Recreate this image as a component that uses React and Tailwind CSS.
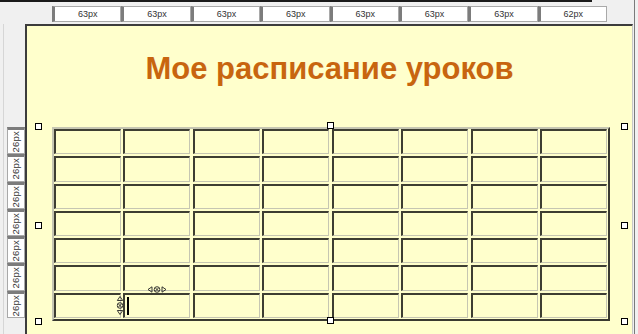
import React from "react";

const cols = ["63px", "63px", "63px", "63px", "63px", "63px", "63px", "62px"];
const rows = [0, 1, 2, 3, 4, 5, 6];

function Handle({ className }) {
  return (
    <div
      className={`absolute w-[7px] h-[7px] border border-black bg-white ${className}`}
    />
  );
}

function ResizeGlyph({ vertical }) {
  return (
    <svg
      width="20"
      height="7"
      viewBox="0 0 20 7"
      className={vertical ? "rotate-90" : ""}
    >
      <path d="M1 3.5 L5 0.8 L5 6.2 Z" fill="none" stroke="#222" strokeWidth="0.9" />
      <circle cx="10" cy="3.5" r="2.8" fill="none" stroke="#222" strokeWidth="0.9" />
      <path d="M8.3 1.8 L11.7 5.2 M11.7 1.8 L8.3 5.2" stroke="#222" strokeWidth="0.9" />
      <path d="M19 3.5 L15 0.8 L15 6.2 Z" fill="none" stroke="#222" strokeWidth="0.9" />
    </svg>
  );
}

export default function App() {
  return (
    <div className="w-[638px] h-[334px] overflow-hidden bg-[#f0f0f0] flex font-['Liberation_Sans',Arial,sans-serif]">
      <div className="w-[634px] flex flex-col">
        {/* window edge above */}
        <div className="h-[2px] w-[592px] bg-[#1a1a1a]" />

        {/* column ruler */}
        <div className="mt-[4px] ml-[52px] flex w-[555px] h-[16px]">
          {cols.map((c, i) => (
            <div
              key={i}
              className="flex-1 border-l-[3px] border-l-[#7c7c7c] border-y border-r border-[#a9a9a9] bg-white flex items-center justify-center text-[9px] text-[#333] leading-none"
            >
              {c}
            </div>
          ))}
        </div>

        {/* body */}
        <div className="mt-[2px] flex flex-1">
          {/* row ruler */}
          <div className="ml-[3px] w-[22px] border-l border-[#d6d6d6] pl-[3px] pt-[103px] flex flex-col">
            {rows.map((r) => (
              <div
                key={r}
                className="h-[27.3px] w-[18px] border-t-[3px] border-t-[#7c7c7c] border-x border-b border-[#a9a9a9] bg-white flex items-center justify-center overflow-hidden"
              >
                <span className="[writing-mode:vertical-rl] rotate-180 text-[9.5px] tracking-[0.2px] text-[#333] leading-none">
                  26px
                </span>
              </div>
            ))}
          </div>

          {/* canvas */}
          <div className="w-[608px] bg-[#ffffcc] border-l-2 border-t-2 border-[#3c3c3c] border-r border-r-[#c8c8c8]">
            <h1 className="pt-[25px] text-center text-[31px] leading-[36px] font-bold text-[#c8650f]">
              Мое расписание уроков
            </h1>

            <div className="relative mt-[40px] ml-[25px] w-[558px]">
              <div className="border-2 border-t-[#c6c6b2] border-l-[#c6c6b2] border-b-[#3a3a30] border-r-[#3a3a30] pr-px pb-px">
                <div className="grid grid-cols-8 gap-x-[2.5px] gap-y-[2px] auto-rows-[25.3px]">
                  {rows.map((r) =>
                    cols.map((c, i) => (
                      <div
                        key={`${r}-${i}`}
                        className="border-t-2 border-l-2 border-t-[#3e3e32] border-l-[#3e3e32] border-b border-r border-b-[#c6c6b2] border-r-[#c6c6b2]"
                      />
                    ))
                  )}
                </div>
              </div>

              {/* selection handles */}
              <Handle className="left-[-17px] top-[-4px]" />
              <Handle className="left-[275px] top-[-5px]" />
              <Handle className="left-[569px] top-[-4px]" />
              <Handle className="left-[-17px] top-[95px]" />
              <Handle className="left-[569px] top-[95px]" />
              <Handle className="left-[-17px] top-[191px]" />
              <Handle className="left-[275px] top-[190px]" />
              <Handle className="left-[569px] top-[191px]" />

              {/* column resize cursor */}
              <div className="absolute left-[95px] top-[159px]">
                <ResizeGlyph />
              </div>
              <div className="absolute left-[58px] top-[175px]">
                <ResizeGlyph vertical />
              </div>
              <div className="absolute left-[75px] top-[170px] w-[2px] h-[18px] bg-black" />
            </div>
          </div>
        </div>
      </div>
      <div className="w-px bg-[#7a7a7a]" />
    </div>
  );
}
